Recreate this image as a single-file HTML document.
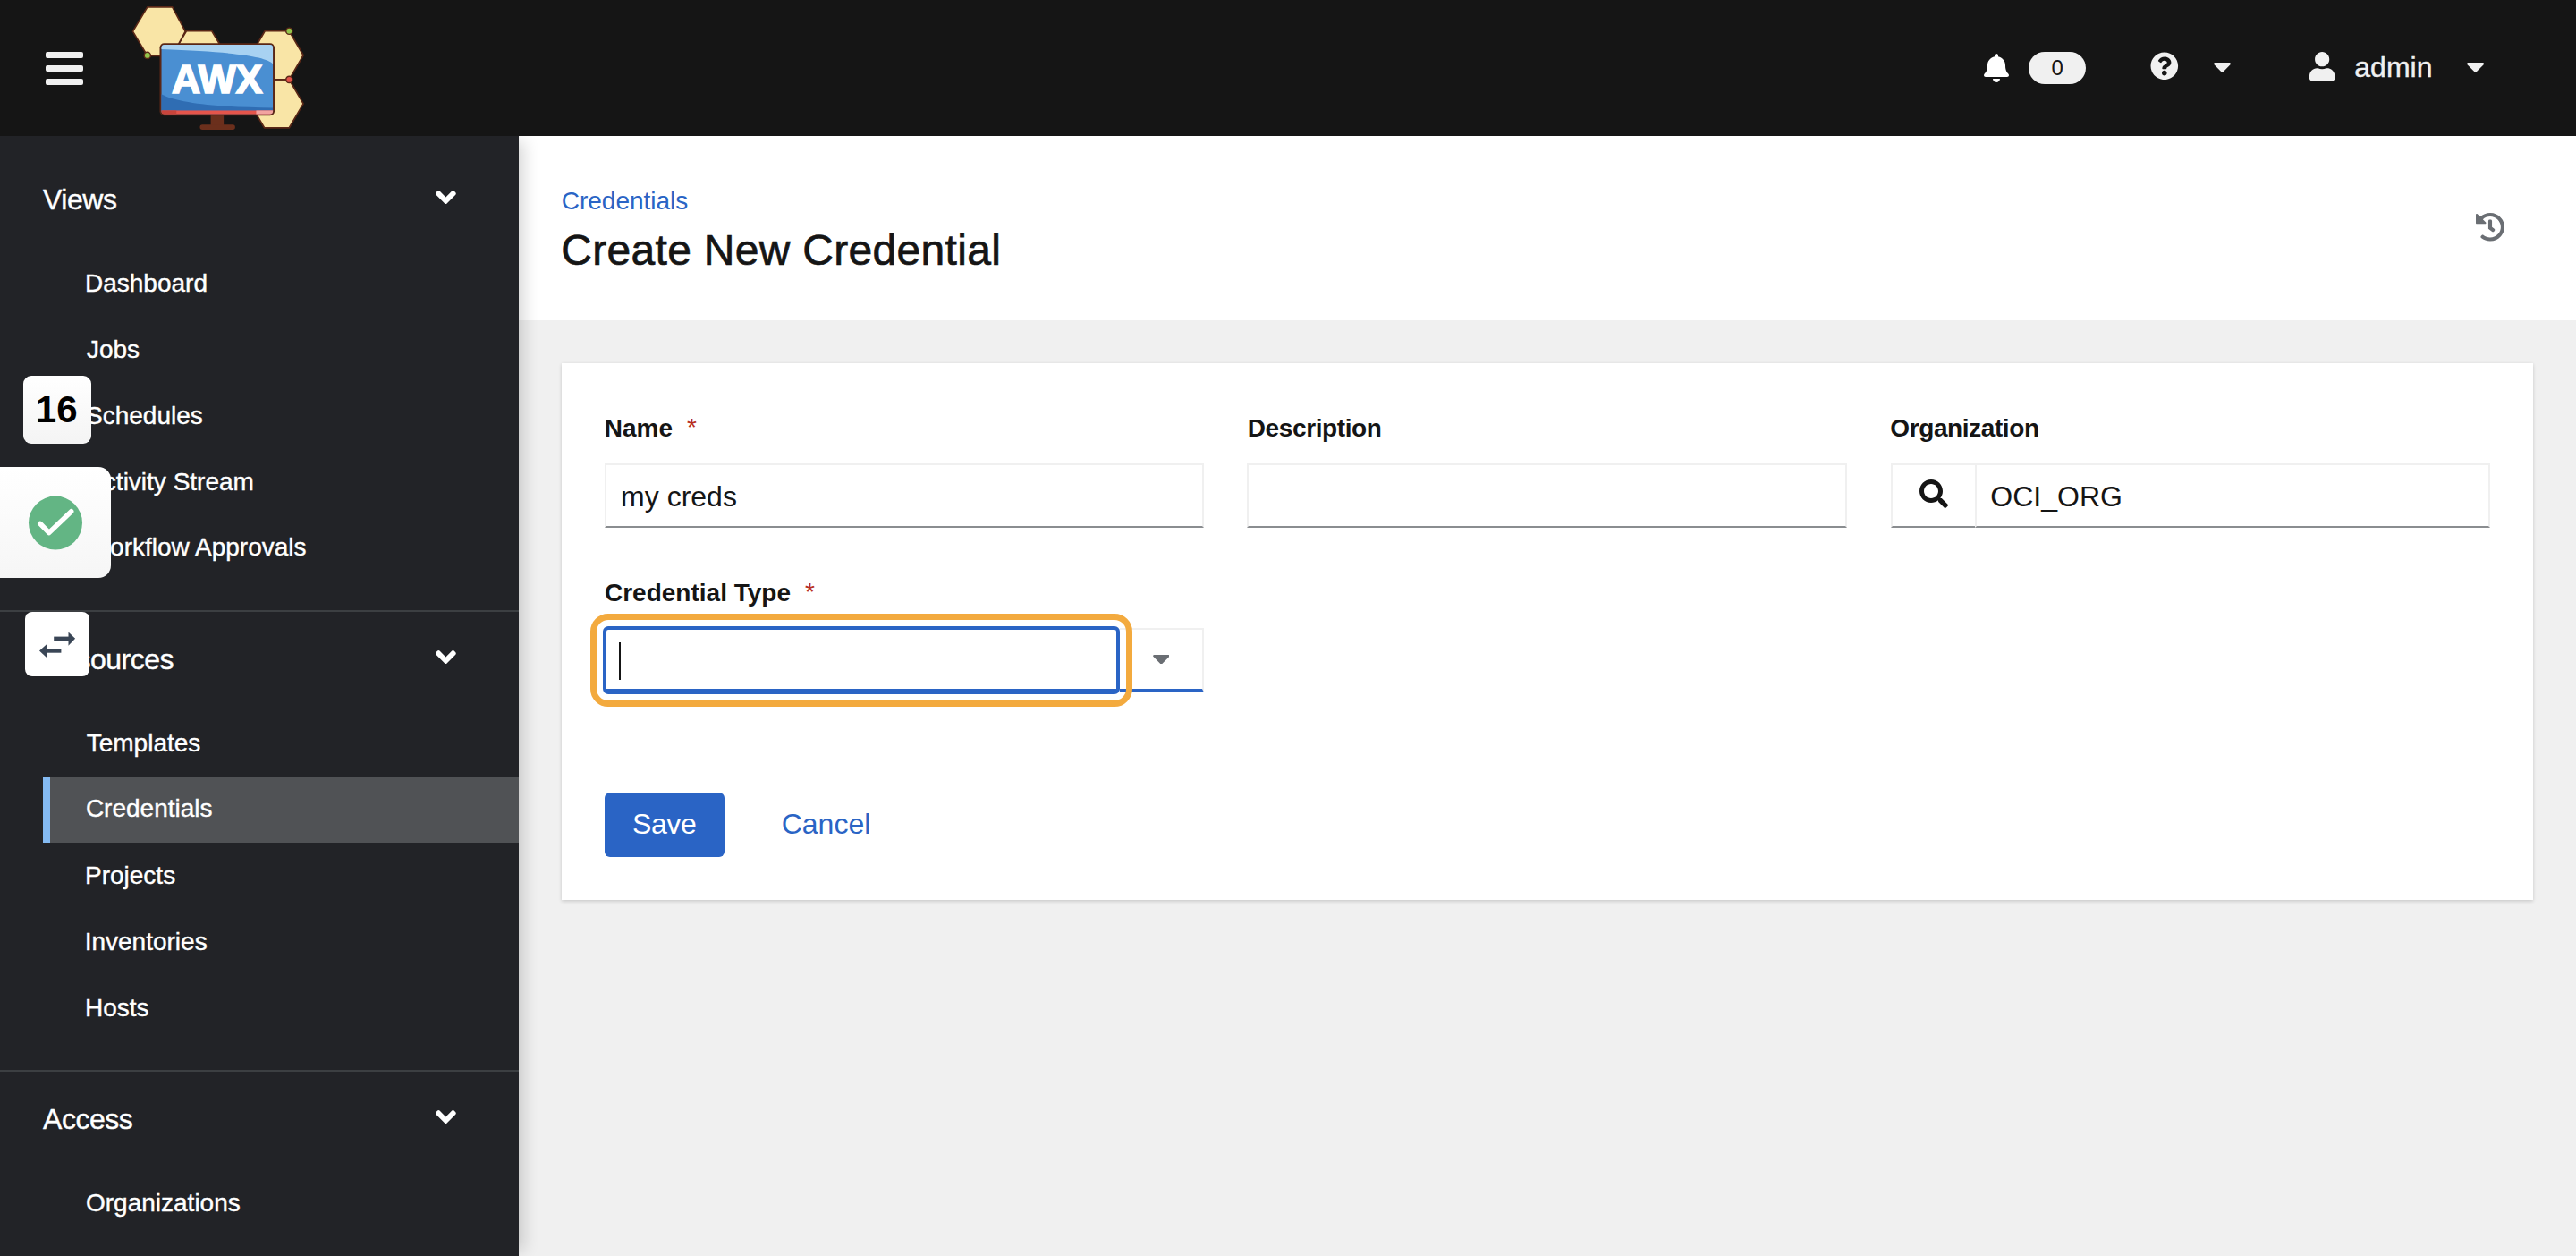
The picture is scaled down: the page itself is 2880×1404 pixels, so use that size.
<!DOCTYPE html>
<html><head><meta charset="utf-8"><style>
html,body{margin:0;padding:0;}
body{width:2880px;height:1404px;overflow:hidden;position:relative;background:#f0f0f0;font-family:"Liberation Sans",sans-serif;}
.a{position:absolute;display:block;}
.t{position:absolute;white-space:nowrap;}
</style></head><body>
<div class="a" style="left:580px;top:152px;width:2300px;height:206px;background:#fff"></div>
<div class="a" style="left:628px;top:406px;width:2204px;height:600px;background:#fff;box-shadow:0 2px 4px 0 rgba(3,3,3,.12),0 0 4px 0 rgba(3,3,3,.06)"></div>
<div class="a" style="left:0;top:152px;width:580px;height:1252px;background:#222327;box-shadow:12px 0 16px -6px rgba(3,3,3,.16);z-index:2"></div>
<div class="a" style="left:0;top:0;width:2880px;height:152px;background:#151515;z-index:3"></div>
<div class="a" style="left:0;top:0;width:2880px;height:152px;z-index:4">
<div class="a" style="left:51px;top:58px;width:42px;height:7px;border-radius:2px;background:#f0f0f0"></div>
<div class="a" style="left:51px;top:73px;width:42px;height:7px;border-radius:2px;background:#f0f0f0"></div>
<div class="a" style="left:51px;top:88px;width:42px;height:7px;border-radius:2px;background:#f0f0f0"></div>
<svg class="a" style="left:140px;top:0px;width:210px;height:152px" viewBox="0 0 1735 1256">
<g stroke="#5a2716" stroke-width="14" stroke-linejoin="round" fill="#f9e5a6">
<polygon points="430,512 565,287 800,287 935,512 800,737 565,737"/>
<polygon points="70,290 205,65 435,65 555,290 435,515 205,515"/>
<polygon points="1160,510 1290,287 1515,287 1645,510 1515,735 1290,735"/>
<polygon points="1155,958 1285,735 1515,735 1645,958 1515,1180 1285,1180"/>
</g>
<line x1="1370" y1="735" x2="1515" y2="735" stroke="#5a2716" stroke-width="14"/>
<circle cx="205" cy="512" r="30" fill="#93c54b" stroke="#5a2716" stroke-width="12"/>
<circle cx="1515" cy="287" r="30" fill="#93c54b" stroke="#5a2716" stroke-width="12"/>
<circle cx="1515" cy="735" r="30" fill="#e2534a" stroke="#5a2716" stroke-width="12"/>
<rect x="790" y="1060" width="120" height="100" fill="#6b2f1c"/>
<rect x="690" y="1150" width="325" height="48" rx="22" fill="#6b2f1c"/>
<rect x="318" y="398" width="1062" height="670" rx="42" fill="#5a2716"/>
<clipPath id="scr"><rect x="333" y="413" width="1032" height="640" rx="30"/></clipPath>
<g clip-path="url(#scr)">
<rect x="333" y="413" width="1032" height="640" fill="#4a8fd2"/>
<path d="M333 413 H1365 V590 C1300 520 1000 480 333 455 Z" fill="#a8d2f2"/>
<path d="M333 870 C500 960 900 990 1365 995 V1025 H333 Z" fill="#2f6db3"/>
<rect x="333" y="1020" width="1032" height="40" fill="#e5554b"/>
<rect x="333" y="1020" width="140" height="40" fill="#c9443b"/>
<rect x="1210" y="1020" width="160" height="40" fill="#f2a3a0"/>
</g>
<text x="849" y="860" text-anchor="middle" font-family="Liberation Sans" font-weight="bold" font-size="368" fill="#fff" stroke="#fff" stroke-width="14">AWX</text>
</svg>
<svg class="a" style="left:2218px;top:60px;width:28px;height:32px" viewBox="0 0 448 512" preserveAspectRatio="none"><path fill="#fff" d="M224 512c35.32 0 63.97-28.65 63.97-64H160.03c0 35.35 28.65 64 63.97 64zm215.39-149.710c-19.32-20.76-55.47-51.99-55.47-154.29 0-77.7-54.48-139.9-127.94-155.16V32c0-17.67-14.32-32-31.98-32s-31.98 14.33-31.98 32v20.84C118.56 68.1 64.08 130.3 64.08 208c0 102.3-36.15 133.53-55.47 154.29-6 6.45-8.66 14.16-8.610 21.71.11 16.4 12.98 32 32.1 32h383.8c19.12 0 32-15.6 32.1-32 .05-7.55-2.61-15.27-8.61-21.71z"/></svg>
<div class="a" style="left:2268px;top:58px;width:64px;height:36px;border-radius:18px;background:#f0f0f0"></div>
<div class="t" style="left:2293.6px;top:63.8px;font-size:24px;line-height:24px;color:#151515;">0</div>
<svg class="a" style="left:2404.1px;top:57.9px;width:31.6px;height:31.6px" viewBox="0 0 512 512" preserveAspectRatio="none"><path fill="#f0f0f0" d="M504 256c0 136.997-111.043 248-248 248S8 392.997 8 256C8 119.083 119.043 8 256 8s248 111.083 248 248zM262.655 90c-54.497 0-89.255 22.957-116.549 63.758-3.536 5.286-2.353 12.415 2.715 16.258l34.699 26.31c5.205 3.947 12.621 3.008 16.665-2.122 17.864-22.658 30.113-35.797 57.303-35.797 20.429 0 45.698 13.148 45.698 32.958 0 14.976-12.363 22.667-32.534 33.976C247.128 238.528 216 254.941 216 296v4c0 6.627 5.373 12 12 12h56c6.627 0 12-5.373 12-12v-1.333c0-28.462 83.186-29.647 83.186-106.667 0-58.002-60.165-102-116.531-102zM256 338c-25.365 0-46 20.635-46 46 0 25.364 20.635 46 46 46s46-20.636 46-46c0-25.365-20.635-46-46-46z"/></svg>
<svg class="a" style="left:2474.5px;top:69.8px;width:19px;height:10.9px" viewBox="9 192 302 168.7" preserveAspectRatio="none"><path fill="#f0f0f0" d="M31.3 192h257.3c17.8 0 26.7 21.5 14.1 34.1L174.1 354.8c-7.8 7.8-20.5 7.8-28.300 0L17.2 226.1C4.6 213.5 13.5 192 31.3 192z"/></svg>
<svg class="a" style="left:2582px;top:57.8px;width:28.3px;height:32.5px" viewBox="0 0 448 512" preserveAspectRatio="none"><path fill="#f0f0f0" d="M224 256c70.7 0 128-57.3 128-128S294.7 0 224 0 96 57.3 96 128s57.3 128 128 128zm89.6 32h-16.7c-22.2 10.2-46.9 16-72.9 16s-50.6-5.8-72.9-16h-16.7C60.2 288 0 348.2 0 422.4V464c0 26.5 21.5 48 48 48h352c26.5 0 48-21.5 48-48v-41.6c0-74.2-60.2-134.4-134.4-134.4z"/></svg>
<div class="t" style="left:2632.3px;top:59.2px;font-size:32px;line-height:32px;color:#f0f0f0;-webkit-text-stroke:0.4px #f0f0f0;">admin</div>
<svg class="a" style="left:2758.4px;top:69.8px;width:19.2px;height:10.9px" viewBox="9 192 302 168.7" preserveAspectRatio="none"><path fill="#f0f0f0" d="M31.3 192h257.3c17.8 0 26.7 21.5 14.1 34.1L174.1 354.8c-7.8 7.8-20.5 7.8-28.300 0L17.2 226.1C4.6 213.5 13.5 192 31.3 192z"/></svg>
</div>
<div class="a" style="left:0;top:0;width:580px;height:1404px;z-index:5">
<div class="a" style="left:48px;top:868px;width:532px;height:74px;background:#505255"></div>
<div class="a" style="left:48px;top:868px;width:8px;height:74px;background:#84baf2"></div>
<div class="a" style="left:0;top:682px;width:580px;height:2px;background:#3c3f42"></div>
<div class="a" style="left:0;top:1196px;width:580px;height:2px;background:#3c3f42"></div>
<div class="t" style="left:48.1px;top:207.1px;font-size:32px;line-height:32px;color:#fff;letter-spacing:-0.5px;-webkit-text-stroke:0.4px #fff;">Views</div>
<svg class="a" style="left:487.3px;top:213.4px;width:22.8px;height:15px" viewBox="0 152.5 320 206.9" preserveAspectRatio="none"><path fill="#fff" d="M143 352.3L7 216.3c-9.4-9.4-9.4-24.6 0-33.9l22.6-22.6c9.4-9.4 24.6-9.4 33.9 0l96.4 96.4 96.4-96.4c9.4-9.4 24.6-9.4 33.9 0l22.6 22.6c9.4 9.4 9.4 24.6 0 33.9l-136 136c-9.2 9.4-24.4 9.4-33.8 0z"/></svg>
<div class="t" style="left:95.0px;top:302.9px;font-size:28px;line-height:28px;color:#fff;-webkit-text-stroke:0.4px #fff;">Dashboard</div>
<div class="t" style="left:96.9px;top:377.1px;font-size:28px;line-height:28px;color:#fff;-webkit-text-stroke:0.4px #fff;">Jobs</div>
<div class="t" style="left:96.0px;top:450.7px;font-size:28px;line-height:28px;color:#fff;-webkit-text-stroke:0.4px #fff;">Schedules</div>
<div class="t" style="left:97.2px;top:524.9px;font-size:28px;line-height:28px;color:#fff;-webkit-text-stroke:0.4px #fff;">Activity Stream</div>
<div class="t" style="left:97.2px;top:598.3px;font-size:28px;line-height:28px;color:#fff;-webkit-text-stroke:0.4px #fff;">Workflow Approvals</div>
<div class="t" style="left:45.6px;top:721.0px;font-size:32px;line-height:32px;color:#fff;letter-spacing:-0.5px;-webkit-text-stroke:0.4px #fff;">Resources</div>
<svg class="a" style="left:487.3px;top:727px;width:22.8px;height:15px" viewBox="0 152.5 320 206.9" preserveAspectRatio="none"><path fill="#fff" d="M143 352.3L7 216.3c-9.4-9.4-9.4-24.6 0-33.9l22.6-22.6c9.4-9.4 24.6-9.4 33.9 0l96.4 96.4 96.4-96.4c9.4-9.4 24.6-9.4 33.9 0l22.6 22.6c9.4 9.4 9.4 24.6 0 33.9l-136 136c-9.2 9.4-24.4 9.4-33.8 0z"/></svg>
<div class="t" style="left:96.7px;top:816.8px;font-size:28px;line-height:28px;color:#fff;-webkit-text-stroke:0.4px #fff;">Templates</div>
<div class="t" style="left:95.9px;top:890.3px;font-size:28px;line-height:28px;color:#fff;-webkit-text-stroke:0.4px #fff;">Credentials</div>
<div class="t" style="left:95.0px;top:965.0px;font-size:28px;line-height:28px;color:#fff;-webkit-text-stroke:0.4px #fff;">Projects</div>
<div class="t" style="left:94.7px;top:1039.1px;font-size:28px;line-height:28px;color:#fff;-webkit-text-stroke:0.4px #fff;">Inventories</div>
<div class="t" style="left:95.0px;top:1113.3px;font-size:28px;line-height:28px;color:#fff;-webkit-text-stroke:0.4px #fff;">Hosts</div>
<div class="t" style="left:48.1px;top:1234.8px;font-size:32px;line-height:32px;color:#fff;letter-spacing:-0.5px;-webkit-text-stroke:0.4px #fff;">Access</div>
<svg class="a" style="left:487.3px;top:1241px;width:22.8px;height:15px" viewBox="0 152.5 320 206.9" preserveAspectRatio="none"><path fill="#fff" d="M143 352.3L7 216.3c-9.4-9.4-9.4-24.6 0-33.9l22.6-22.6c9.4-9.4 24.6-9.4 33.9 0l96.4 96.4 96.4-96.4c9.4-9.4 24.6-9.4 33.9 0l22.6 22.6c9.4 9.4 9.4 24.6 0 33.9l-136 136c-9.2 9.4-24.4 9.4-33.8 0z"/></svg>
<div class="t" style="left:96.0px;top:1331.0px;font-size:28px;line-height:28px;color:#fff;-webkit-text-stroke:0.4px #fff;">Organizations</div>
</div>
<div class="a" style="left:0;top:0;width:2880px;height:1404px;z-index:1">
<div class="t" style="left:627.7px;top:210.7px;font-size:28px;line-height:28px;color:#2a64c5;">Credentials</div>
<div class="t" style="left:627.3px;top:255.9px;font-size:48px;line-height:48px;color:#151515;letter-spacing:0.3px;-webkit-text-stroke:0.7px #151515;">Create New Credential</div>
<svg class="a" style="left:2768px;top:238px;width:32px;height:31.5px" viewBox="8 8 496 496" preserveAspectRatio="none"><path fill="#6a6e73" d="M504 255.531c.253 136.64-111.18 248.372-247.82 248.468-59.015.042-113.223-20.53-155.822-54.911-11.077-8.94-11.905-25.541-1.839-35.607l11.267-11.267c8.609-8.609 22.353-9.551 31.891-1.984C173.062 425.135 212.781 440 256 440c101.705 0 184-82.311 184-184 0-101.705-82.311-184-184-184-48.814 0-93.149 18.969-126.068 49.932l50.754 50.754c10.08 10.08 2.941 27.314-11.313 27.314H24c-8.837 0-16-7.163-16-16V38.627c0-14.254 17.234-21.393 27.314-11.314l49.372 49.372C129.209 34.136 189.552 8 256 8c136.81 0 247.747 110.78 248 247.531zm-180.912 78.784l9.823-12.63c8.138-10.463 6.253-25.542-4.21-33.679L288 256.349V152c0-13.255-10.745-24-24-24h-16c-13.255 0-24 10.745-24 24v135.651l65.409 50.874c10.463 8.137 25.541 6.253 33.679-4.21z"/></svg>
<div class="t" style="left:675.8px;top:465.2px;font-size:28px;line-height:28px;color:#151515;font-weight:bold;">Name</div>
<div class="t" style="left:768.1px;top:464.2px;font-size:28px;line-height:28px;color:#b82f1f;">*</div>
<div class="t" style="left:1394.8px;top:465.0px;font-size:28px;line-height:28px;color:#151515;font-weight:bold;letter-spacing:-0.4px;">Description</div>
<div class="t" style="left:2113.3px;top:465.0px;font-size:28px;line-height:28px;color:#151515;font-weight:bold;letter-spacing:-0.4px;">Organization</div>
<div class="a" style="left:676px;top:518px;width:670px;height:72px;box-sizing:border-box;border:2px solid #f0f0f0;border-bottom-color:#8a8d90;background:#fff"></div>
<div class="a" style="left:1394px;top:518px;width:671px;height:72px;box-sizing:border-box;border:2px solid #f0f0f0;border-bottom-color:#8a8d90;background:#fff"></div>
<div class="a" style="left:2114px;top:518px;width:96px;height:72px;box-sizing:border-box;border:2px solid #f0f0f0;border-bottom-color:#8a8d90;background:#fff"></div>
<div class="a" style="left:2208px;top:518px;width:576px;height:72px;box-sizing:border-box;border:2px solid #f0f0f0;border-bottom-color:#8a8d90;background:#fff"></div>
<div class="t" style="left:694.1px;top:538.8px;font-size:32px;line-height:32px;color:#151515;">my creds</div>
<svg class="a" style="left:2146px;top:536px;width:32px;height:32px" viewBox="0 0 512 512" preserveAspectRatio="none"><path fill="#151515" d="M505 442.7L405.3 343c-4.5-4.5-10.6-7-17-7H372c27.6-35.3 44-79.7 44-128C416 93.1 322.9 0 208 0S0 93.1 0 208s93.1 208 208 208c48.3 0 92.7-16.4 128-44v16.3c0 6.4 2.5 12.5 7 17l99.7 99.7c9.4 9.4 24.6 9.4 33.9 0l28.3-28.3c9.4-9.4 9.4-24.6.1-34zM208 336c-70.7 0-128-57.2-128-128 0-70.7 57.2-128 128-128 70.7 0 128 57.2 128 128 0 70.7-57.2 128-128 128z"/></svg>
<div class="t" style="left:2225.3px;top:538.7px;font-size:32px;line-height:32px;color:#151515;">OCI_ORG</div>
<div class="t" style="left:676.0px;top:649.2px;font-size:28px;line-height:28px;color:#151515;font-weight:bold;">Credential Type</div>
<div class="t" style="left:900.1px;top:648.2px;font-size:28px;line-height:28px;color:#b82f1f;">*</div>
<div class="a" style="left:1252px;top:702px;width:94px;height:72px;box-sizing:border-box;border:2px solid #f0f0f0;border-left:none;border-bottom:4px solid #2a64c5;background:#fff"></div>
<div class="a" style="left:674px;top:700px;width:578px;height:76px;box-sizing:border-box;border:4px solid #2a64c5;border-bottom-width:6px;border-radius:6px;background:#fff"></div>
<div class="a" style="left:692px;top:718px;width:2px;height:42px;background:#151515"></div>
<svg class="a" style="left:1288.5px;top:731.9px;width:18.6px;height:10.5px" viewBox="9 192 302 168.7" preserveAspectRatio="none"><path fill="#6a6e73" d="M31.3 192h257.3c17.8 0 26.7 21.5 14.1 34.1L174.1 354.8c-7.8 7.8-20.5 7.8-28.300 0L17.2 226.1C4.6 213.5 13.5 192 31.3 192z"/></svg>
<div class="a" style="left:660px;top:686px;width:605.5px;height:103.6px;box-sizing:border-box;border:7.4px solid #f3aa3e;border-radius:20px"></div>
<div class="a" style="left:676px;top:886px;width:134px;height:72px;border-radius:6px;background:#2a64c5"></div>
<div class="t" style="left:707.0px;top:905.0px;font-size:32px;line-height:32px;color:#fff;letter-spacing:-0.4px;">Save</div>
<div class="t" style="left:873.7px;top:905.0px;font-size:32px;line-height:32px;color:#2a64c5;">Cancel</div>
</div>
<div class="a" style="left:0;top:0;width:580px;height:1404px;z-index:6">
<div class="a" style="left:26px;top:420px;width:76px;height:76px;border-radius:9px;background:linear-gradient(#fff,#f4f4f4)"></div>
<div class="t" style="left:39.8px;top:437.1px;font-size:42px;line-height:42px;color:#000;font-weight:bold;letter-spacing:0.2px;">16</div>
<div class="a" style="left:-30px;top:522px;width:154px;height:124px;border-radius:14px;background:linear-gradient(#fff,#f6f6f6)"></div>
<svg class="a" style="left:0;top:522px;width:124px;height:124px" viewBox="0 522 124 124"><circle cx="62" cy="584.6" r="30" fill="#63b584"/><polyline points="44.8,585.3 54.8,595.5 79.7,571.7" fill="none" stroke="#fff" stroke-width="5.5" stroke-linecap="round" stroke-linejoin="round"/></svg>
<div class="a" style="left:28px;top:684px;width:72px;height:72px;border-radius:8px;background:#fff"></div>
<svg class="a" style="left:0;top:660px;width:140px;height:120px" viewBox="0 660 140 120"><g fill="#3a4656"><rect x="60.2" y="711.6" width="17" height="4.4"/><polygon points="76.5,706.4 84.1,713.8 76.5,721.7"/><rect x="51.6" y="725.3" width="16.8" height="4.4"/><polygon points="52.1,720.2 44,727.5 52.1,735"/></g></svg>
</div>
</body></html>
